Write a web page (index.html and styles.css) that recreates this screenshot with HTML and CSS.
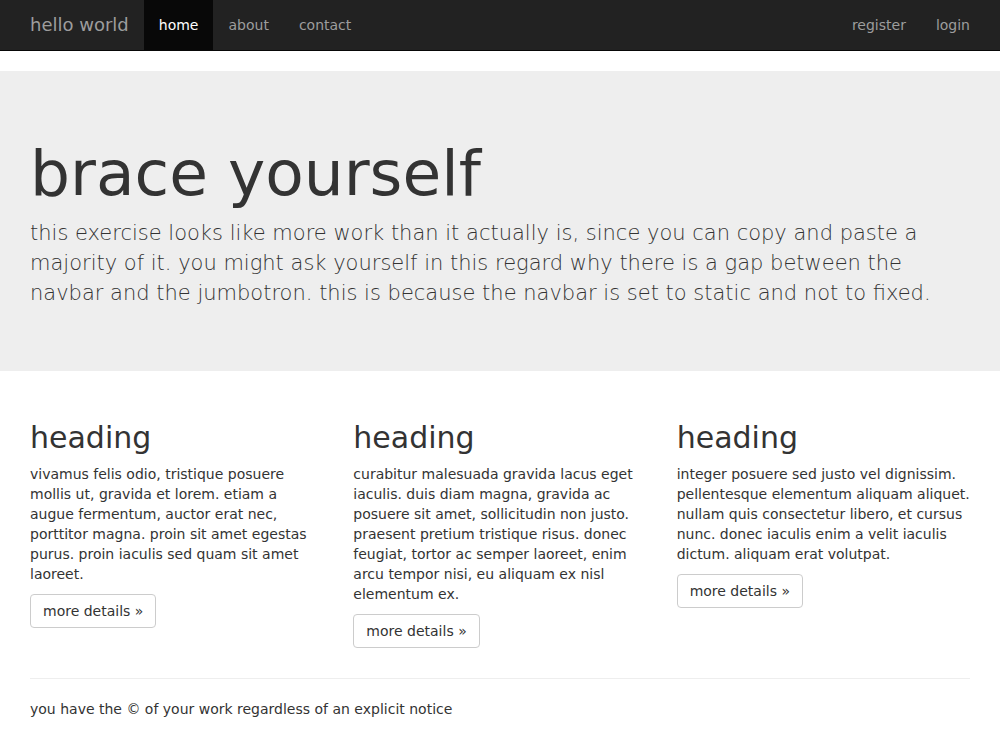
FILE: index.html
```html
<!DOCTYPE html>
<html>
<head>
<meta charset="utf-8">
<title>hello world</title>
<link rel="stylesheet" href="styles.css">
</head>
<body>
<nav class="navbar">
  <div class="container nav-inner">
    <a class="brand" href="#">hello world</a>
    <ul class="nav">
      <li><a class="active" href="#">home</a></li>
      <li><a href="#">about</a></li>
      <li><a href="#">contact</a></li>
    </ul>
    <ul class="nav nav-right">
      <li><a href="#">register</a></li>
      <li><a href="#">login</a></li>
    </ul>
  </div>
</nav>
<div class="jumbotron">
  <div class="container">
    <h1>brace yourself</h1>
    <p class="lead">this exercise looks like more work than it actually is, since you can copy and paste a majority of it. you might ask yourself in this regard why there is a gap between the navbar and the jumbotron. this is because the navbar is set to static and not to fixed.</p>
  </div>
</div>
<div class="container">
  <div class="row">
    <div class="col">
      <h2>heading</h2>
      <p>vivamus felis odio, tristique posuere mollis ut, gravida et lorem. etiam a augue fermentum, auctor erat nec, porttitor magna. proin sit amet egestas purus. proin iaculis sed quam sit amet laoreet.</p>
      <p><a class="btn" href="#">more details &raquo;</a></p>
    </div>
    <div class="col">
      <h2>heading</h2>
      <p>curabitur malesuada gravida lacus eget iaculis. duis diam magna, gravida ac posuere sit amet, sollicitudin non justo. praesent pretium tristique risus. donec feugiat, tortor ac semper laoreet, enim arcu tempor nisi, eu aliquam ex nisl elementum ex.</p>
      <p><a class="btn" href="#">more details &raquo;</a></p>
    </div>
    <div class="col">
      <h2>heading</h2>
      <p>integer posuere sed justo vel dignissim. pellentesque elementum aliquam aliquet. nullam quis consectetur libero, et cursus nunc. donec iaculis enim a velit iaculis dictum. aliquam erat volutpat.</p>
      <p><a class="btn" href="#">more details &raquo;</a></p>
    </div>
  </div>
  <hr class="rule">
  <footer class="footer">
    <p>you have the &copy; of your work regardless of an explicit notice</p>
  </footer>
</div>
</body>
</html>
```
FILE: styles.css
```css
* { box-sizing: border-box; }
html, body { margin: 0; padding: 0; }
body {
  font-family: "DejaVu Sans", sans-serif;
  font-size: 14px;
  line-height: 1.42857143;
  color: #333;
  background: #fff;
}
a { text-decoration: none; }
.container {
  width: 970px;
  margin: 0 auto;
  padding: 0 15px;
}
.navbar {
  background: #222;
  border-bottom: 1px solid #080808;
  height: 51px;
  margin-bottom: 20px;
}
.nav-inner {
  display: flex;
  align-items: stretch;
  height: 50px;
}
.brand {
  display: block;
  padding: 15px 15px;
  margin-left: -15px;
  font-size: 18px;
  line-height: 20px;
  height: 50px;
  color: #9d9d9d;
}
.nav {
  display: flex;
  list-style: none;
  margin: 0;
  padding: 0;
}
.nav a {
  display: block;
  padding: 15px;
  line-height: 20px;
  height: 50px;
  color: #9d9d9d;
}
.nav a.active {
  background: #080808;
  color: #fff;
}
.nav-right {
  margin-left: auto;
  margin-right: -15px;
}
.jumbotron {
  background: #eee;
  padding: 48px 0;
  margin-bottom: 30px;
}
.jumbotron h1 {
  font-size: 63px;
  line-height: 1.1;
  font-weight: 500;
  margin: 20px 0 10px;
}
.lead {
  font-size: 21px;
  line-height: 1.42857143;
  font-weight: 200;
  margin: 0 0 15px;
}
.row {
  display: flex;
  margin: 0 -15px;
}
.col {
  flex: 1 1 0;
  padding: 0 15px;
}
.col h2 {
  font-size: 30px;
  line-height: 1.1;
  font-weight: 500;
  margin: 20px 0 10px;
}
.col p {
  margin: 0 0 10px;
}
.btn {
  display: inline-block;
  padding: 6px 12px;
  font-size: 14px;
  line-height: 1.42857143;
  color: #333;
  background: #fff;
  border: 1px solid #ccc;
  border-radius: 4px;
}
.rule {
  margin: 20px 0;
  border: 0;
  border-top: 1px solid #eee;
}
.footer p {
  margin: 0 0 10px;
}
```
